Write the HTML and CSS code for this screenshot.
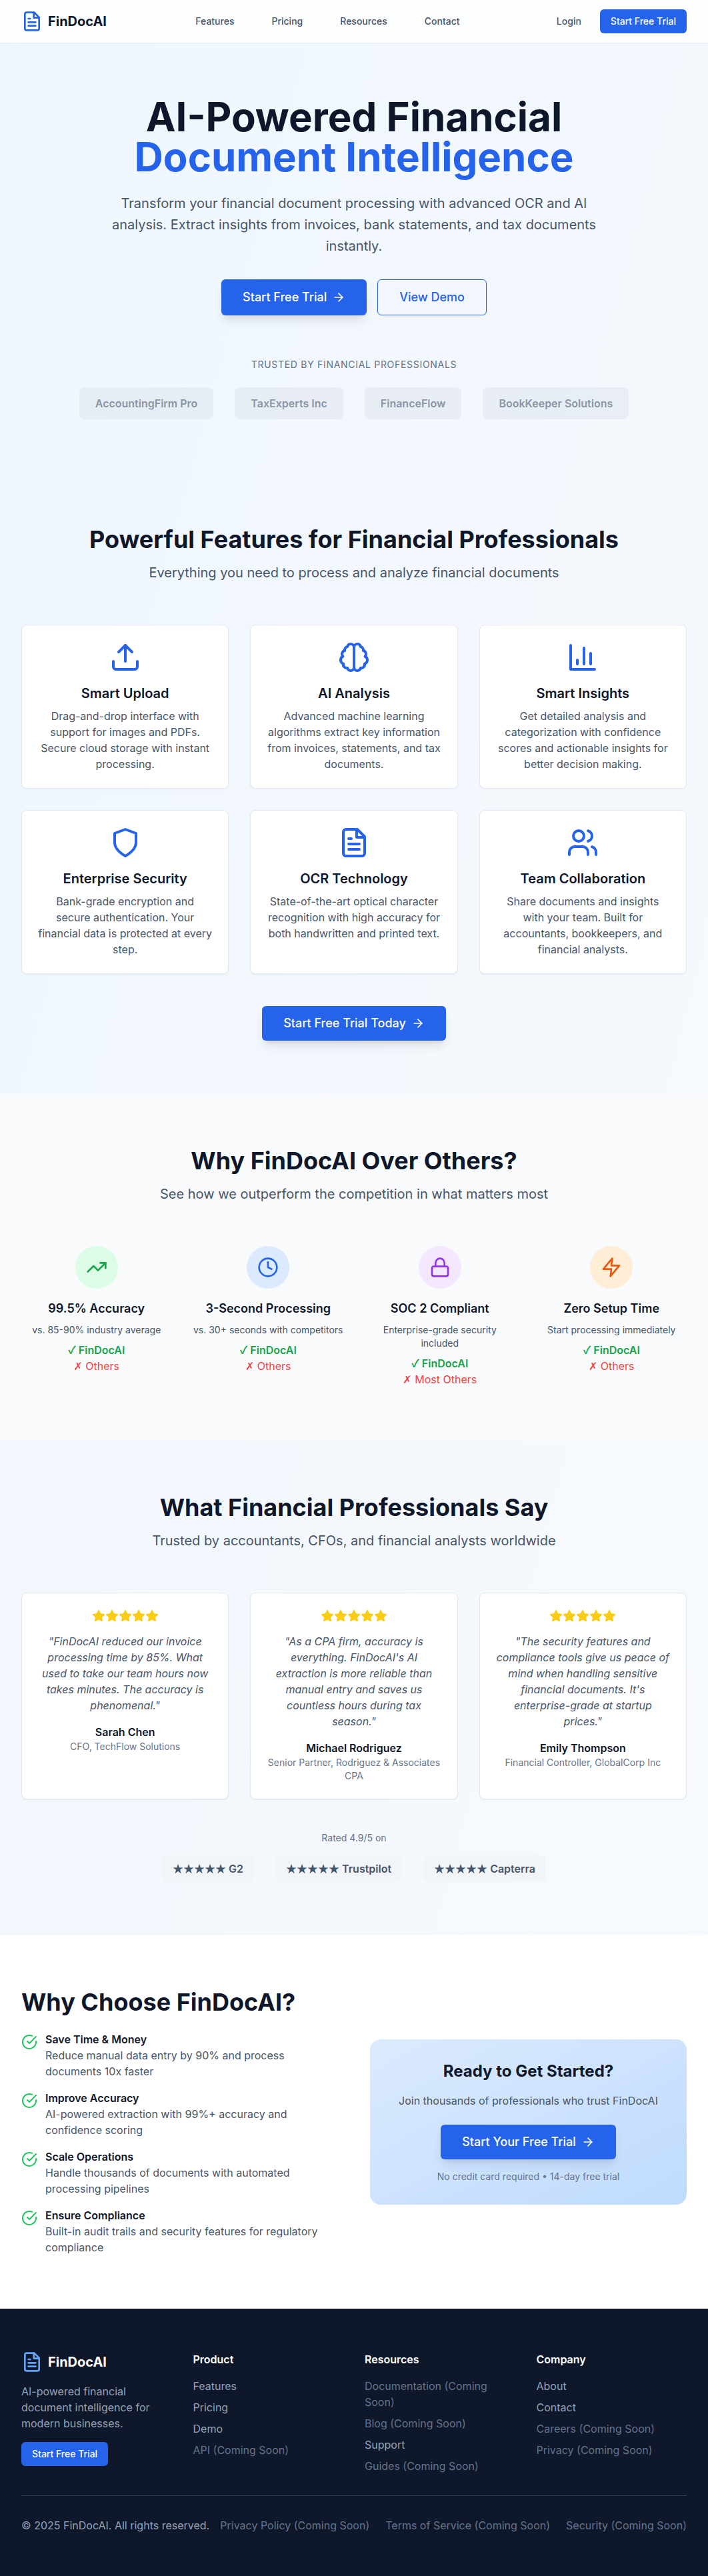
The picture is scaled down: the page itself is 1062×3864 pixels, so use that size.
FILE: index.html
```html
<!DOCTYPE html>
<html lang="en">
<head>
  <meta charset="utf-8">
  <meta name="viewport" content="width=device-width, initial-scale=1">
  <title>FinDocAI – AI-Powered Financial Document Intelligence</title>
  <link rel="stylesheet" href="styles.css">
</head>
<body>
  <svg class="sprite" aria-hidden="true">
    <symbol id="file-text" viewBox="0 0 24 24"><path d="M14.5 2H6a2 2 0 0 0-2 2v16a2 2 0 0 0 2 2h12a2 2 0 0 0 2-2V7.5L14.5 2z"/><path d="M14 2v6h6"/><path d="M16 13H8"/><path d="M16 17H8"/><path d="M10 9H8"/></symbol>
    <symbol id="arrow-right" viewBox="0 0 24 24"><path d="M5 12h14"/><path d="m12 5 7 7-7 7"/></symbol>
    <symbol id="upload" viewBox="0 0 24 24"><path d="M21 15v4a2 2 0 0 1-2 2H5a2 2 0 0 1-2-2v-4"/><path d="m17 8-5-5-5 5"/><path d="M12 3v12"/></symbol>
    <symbol id="brain" viewBox="0 0 24 24"><path d="M9.5 2A2.5 2.5 0 0 1 12 4.5v15a2.5 2.5 0 0 1-4.96.44 2.5 2.5 0 0 1-2.96-3.08 3 3 0 0 1-.34-5.58 2.5 2.5 0 0 1 1.32-4.24 2.5 2.5 0 0 1 1.98-3A2.5 2.5 0 0 1 9.5 2Z"/><path d="M14.5 2A2.5 2.5 0 0 0 12 4.5v15a2.5 2.5 0 0 0 4.96.44 2.5 2.5 0 0 0 2.96-3.08 3 3 0 0 0 .34-5.58 2.5 2.5 0 0 0-1.32-4.24 2.5 2.5 0 0 0-1.98-3A2.5 2.5 0 0 0 14.5 2Z"/></symbol>
    <symbol id="bar-chart" viewBox="0 0 24 24"><path d="M3 3v18h18"/><path d="M18 17V9"/><path d="M13 17V5"/><path d="M8 17v-3"/></symbol>
    <symbol id="shield" viewBox="0 0 24 24"><path d="M12 22s8-4 8-10V5l-8-3-8 3v7c0 6 8 10 8 10"/></symbol>
    <symbol id="users" viewBox="0 0 24 24"><path d="M16 21v-2a4 4 0 0 0-4-4H6a4 4 0 0 0-4 4v2"/><circle cx="9" cy="7" r="4"/><path d="M22 21v-2a4 4 0 0 0-3-3.87"/><path d="M16 3.13a4 4 0 0 1 0 7.75"/></symbol>
    <symbol id="trending-up" viewBox="0 0 24 24"><path d="m22 7-8.5 8.5-5-5L2 17"/><path d="M16 7h6v6"/></symbol>
    <symbol id="clock" viewBox="0 0 24 24"><circle cx="12" cy="12" r="10"/><path d="M12 6v6l4 2"/></symbol>
    <symbol id="lock" viewBox="0 0 24 24"><rect x="3" y="11" width="18" height="11" rx="2"/><path d="M7 11V7a5 5 0 0 1 10 0v4"/></symbol>
    <symbol id="zap" viewBox="0 0 24 24"><path d="M13 2 3 14h9l-1 8 10-12h-9l1-8z"/></symbol>
    <symbol id="star" viewBox="0 0 24 24"><path d="m12 2 3.09 6.26L22 9.27l-5 4.87 1.18 6.88L12 17.77l-6.18 3.25L7 14.14 2 9.27l6.91-1.01L12 2z"/></symbol>
    <symbol id="check-circle" viewBox="0 0 24 24"><path d="M22 11.08V12a10 10 0 1 1-5.93-9.14"/><path d="m9 11 3 3L22 4"/></symbol>
  </svg>

  <header class="site-header">
    <div class="container header-row">
      <a class="brand" href="#"><svg class="icon icon-lg"><use href="#file-text"/></svg>FinDocAI</a>
      <nav class="main-nav">
        <a href="#features">Features</a>
        <a href="#pricing">Pricing</a>
        <a href="#resources">Resources</a>
        <a href="#contact">Contact</a>
      </nav>
      <div class="header-actions">
        <button class="btn btn-ghost" type="button">Login</button>
        <button class="btn btn-primary" type="button">Start Free Trial</button>
      </div>
    </div>
  </header>

  <main>
    <section class="section hero">
      <div class="container">
        <h1 class="hero-title">AI-Powered Financial <span class="hero-accent">Document Intelligence</span></h1>
        <p class="hero-text">Transform your financial document processing with advanced OCR and AI analysis. Extract insights from invoices, bank statements, and tax documents instantly.</p>
        <div class="hero-actions">
          <button class="btn btn-primary btn-large" type="button">Start Free Trial<svg class="icon icon-sm"><use href="#arrow-right"/></svg></button>
          <button class="btn btn-outline btn-large" type="button">View Demo</button>
        </div>
        <p class="trusted-label">Trusted by Financial Professionals</p>
        <ul class="trusted-list">
          <li>AccountingFirm Pro</li>
          <li>TaxExperts Inc</li>
          <li>FinanceFlow</li>
          <li>BookKeeper Solutions</li>
        </ul>
      </div>
    </section>

    <section class="section" id="features">
      <div class="container">
        <div class="section-head">
          <h2 class="section-title">Powerful Features for Financial Professionals</h2>
          <p class="section-text">Everything you need to process and analyze financial documents</p>
        </div>
        <div class="card-grid">
          <article class="card">
            <svg class="icon icon-xl"><use href="#upload"/></svg>
            <h3 class="card-title">Smart Upload</h3>
            <p class="card-text">Drag-and-drop interface with support for images and PDFs. Secure cloud storage with instant processing.</p>
          </article>
          <article class="card">
            <svg class="icon icon-xl"><use href="#brain"/></svg>
            <h3 class="card-title">AI Analysis</h3>
            <p class="card-text">Advanced machine learning algorithms extract key information from invoices, statements, and tax documents.</p>
          </article>
          <article class="card">
            <svg class="icon icon-xl"><use href="#bar-chart"/></svg>
            <h3 class="card-title">Smart Insights</h3>
            <p class="card-text">Get detailed analysis and categorization with confidence scores and actionable insights for better decision making.</p>
          </article>
          <article class="card">
            <svg class="icon icon-xl"><use href="#shield"/></svg>
            <h3 class="card-title">Enterprise Security</h3>
            <p class="card-text">Bank-grade encryption and secure authentication. Your financial data is protected at every step.</p>
          </article>
          <article class="card">
            <svg class="icon icon-xl"><use href="#file-text"/></svg>
            <h3 class="card-title">OCR Technology</h3>
            <p class="card-text">State-of-the-art optical character recognition with high accuracy for both handwritten and printed text.</p>
          </article>
          <article class="card">
            <svg class="icon icon-xl"><use href="#users"/></svg>
            <h3 class="card-title">Team Collaboration</h3>
            <p class="card-text">Share documents and insights with your team. Built for accountants, bookkeepers, and financial analysts.</p>
          </article>
        </div>
        <div class="section-cta">
          <button class="btn btn-primary btn-large" type="button">Start Free Trial Today<svg class="icon icon-sm"><use href="#arrow-right"/></svg></button>
        </div>
      </div>
    </section>

    <section class="section section-muted">
      <div class="container">
        <div class="section-head">
          <h2 class="section-title">Why FinDocAI Over Others?</h2>
          <p class="section-text">See how we outperform the competition in what matters most</p>
        </div>
        <div class="compare-grid">
          <article class="compare">
            <span class="disc disc-green"><svg class="icon icon-lg"><use href="#trending-up"/></svg></span>
            <h3 class="compare-title">99.5% Accuracy</h3>
            <p class="compare-text">vs. 85-90% industry average</p>
            <p class="compare-us"><span class="tick">✓</span> FinDocAI</p>
            <p class="compare-them"><span class="cross">✗</span> Others</p>
          </article>
          <article class="compare">
            <span class="disc disc-blue"><svg class="icon icon-lg"><use href="#clock"/></svg></span>
            <h3 class="compare-title">3-Second Processing</h3>
            <p class="compare-text">vs. 30+ seconds with competitors</p>
            <p class="compare-us"><span class="tick">✓</span> FinDocAI</p>
            <p class="compare-them"><span class="cross">✗</span> Others</p>
          </article>
          <article class="compare">
            <span class="disc disc-purple"><svg class="icon icon-lg"><use href="#lock"/></svg></span>
            <h3 class="compare-title">SOC 2 Compliant</h3>
            <p class="compare-text">Enterprise-grade security included</p>
            <p class="compare-us"><span class="tick">✓</span> FinDocAI</p>
            <p class="compare-them"><span class="cross">✗</span> Most Others</p>
          </article>
          <article class="compare">
            <span class="disc disc-orange"><svg class="icon icon-lg"><use href="#zap"/></svg></span>
            <h3 class="compare-title">Zero Setup Time</h3>
            <p class="compare-text">Start processing immediately</p>
            <p class="compare-us"><span class="tick">✓</span> FinDocAI</p>
            <p class="compare-them"><span class="cross">✗</span> Others</p>
          </article>
        </div>
      </div>
    </section>

    <section class="section">
      <div class="container">
        <div class="section-head">
          <h2 class="section-title">What Financial Professionals Say</h2>
          <p class="section-text">Trusted by accountants, CFOs, and financial analysts worldwide</p>
        </div>
        <div class="card-grid">
          <article class="card">
            <div class="stars" role="img" aria-label="5 out of 5 stars"><svg class="icon icon-sm"><use href="#star"/></svg><svg class="icon icon-sm"><use href="#star"/></svg><svg class="icon icon-sm"><use href="#star"/></svg><svg class="icon icon-sm"><use href="#star"/></svg><svg class="icon icon-sm"><use href="#star"/></svg></div>
            <p class="quote">"FinDocAI reduced our invoice processing time by 85%. What used to take our team hours now takes minutes. The accuracy is phenomenal."</p>
            <p class="author">Sarah Chen</p>
            <p class="role">CFO, TechFlow Solutions</p>
          </article>
          <article class="card">
            <div class="stars" role="img" aria-label="5 out of 5 stars"><svg class="icon icon-sm"><use href="#star"/></svg><svg class="icon icon-sm"><use href="#star"/></svg><svg class="icon icon-sm"><use href="#star"/></svg><svg class="icon icon-sm"><use href="#star"/></svg><svg class="icon icon-sm"><use href="#star"/></svg></div>
            <p class="quote">"As a CPA firm, accuracy is everything. FinDocAI's AI extraction is more reliable than manual entry and saves us countless hours during tax season."</p>
            <p class="author">Michael Rodriguez</p>
            <p class="role">Senior Partner, Rodriguez &amp; Associates CPA</p>
          </article>
          <article class="card">
            <div class="stars" role="img" aria-label="5 out of 5 stars"><svg class="icon icon-sm"><use href="#star"/></svg><svg class="icon icon-sm"><use href="#star"/></svg><svg class="icon icon-sm"><use href="#star"/></svg><svg class="icon icon-sm"><use href="#star"/></svg><svg class="icon icon-sm"><use href="#star"/></svg></div>
            <p class="quote">"The security features and compliance tools give us peace of mind when handling sensitive financial documents. It's enterprise-grade at startup prices."</p>
            <p class="author">Emily Thompson</p>
            <p class="role">Financial Controller, GlobalCorp Inc</p>
          </article>
        </div>
        <p class="rated-label">Rated 4.9/5 on</p>
        <ul class="rated-list">
          <li><span class="rating">★★★★★</span> G2</li>
          <li><span class="rating">★★★★★</span> Trustpilot</li>
          <li><span class="rating">★★★★★</span> Capterra</li>
        </ul>
      </div>
    </section>

    <section class="section section-white">
      <div class="container choose-grid">
        <div>
          <h2 class="section-title">Why Choose FinDocAI?</h2>
          <ul class="benefits">
            <li class="benefit">
              <svg class="icon icon-md"><use href="#check-circle"/></svg>
              <div><h3 class="benefit-title">Save Time &amp; Money</h3><p>Reduce manual data entry by 90% and process documents 10x faster</p></div>
            </li>
            <li class="benefit">
              <svg class="icon icon-md"><use href="#check-circle"/></svg>
              <div><h3 class="benefit-title">Improve Accuracy</h3><p>AI-powered extraction with 99%+ accuracy and confidence scoring</p></div>
            </li>
            <li class="benefit">
              <svg class="icon icon-md"><use href="#check-circle"/></svg>
              <div><h3 class="benefit-title">Scale Operations</h3><p>Handle thousands of documents with automated processing pipelines</p></div>
            </li>
            <li class="benefit">
              <svg class="icon icon-md"><use href="#check-circle"/></svg>
              <div><h3 class="benefit-title">Ensure Compliance</h3><p>Built-in audit trails and security features for regulatory compliance</p></div>
            </li>
          </ul>
        </div>
        <aside class="signup">
          <h3 class="signup-title">Ready to Get Started?</h3>
          <p class="signup-text">Join thousands of professionals who trust FinDocAI</p>
          <button class="btn btn-primary btn-large" type="button">Start Your Free Trial<svg class="icon icon-sm"><use href="#arrow-right"/></svg></button>
          <p class="signup-note">No credit card required • 14-day free trial</p>
        </aside>
      </div>
    </section>
  </main>

  <footer class="site-footer">
    <div class="container">
      <div class="footer-grid">
        <div>
          <a class="brand brand-light" href="#"><svg class="icon icon-lg"><use href="#file-text"/></svg>FinDocAI</a>
          <p class="footer-text">AI-powered financial document intelligence for modern businesses.</p>
          <button class="btn btn-primary" type="button">Start Free Trial</button>
        </div>
        <div>
          <h3 class="footer-title">Product</h3>
          <ul class="footer-links">
            <li><a href="#features">Features</a></li>
            <li><a href="#pricing">Pricing</a></li>
            <li><a href="#demo">Demo</a></li>
            <li class="soon">API (Coming Soon)</li>
          </ul>
        </div>
        <div>
          <h3 class="footer-title">Resources</h3>
          <ul class="footer-links">
            <li class="soon">Documentation (Coming Soon)</li>
            <li class="soon">Blog (Coming Soon)</li>
            <li><a href="#support">Support</a></li>
            <li class="soon">Guides (Coming Soon)</li>
          </ul>
        </div>
        <div>
          <h3 class="footer-title">Company</h3>
          <ul class="footer-links">
            <li><a href="#about">About</a></li>
            <li><a href="#contact">Contact</a></li>
            <li class="soon">Careers (Coming Soon)</li>
            <li class="soon">Privacy (Coming Soon)</li>
          </ul>
        </div>
      </div>
      <div class="footer-bottom">
        <p>© 2025 FinDocAI. All rights reserved.</p>
        <ul class="legal">
          <li>Privacy Policy (Coming Soon)</li>
          <li>Terms of Service (Coming Soon)</li>
          <li>Security (Coming Soon)</li>
        </ul>
      </div>
    </div>
  </footer>
</body>
</html>
```
FILE: styles.css
```css
*,
*::before,
*::after {
  box-sizing: border-box;
}

body {
  margin: 0;
  background: linear-gradient(to bottom right, #eff6ff, #f8fafc);
  color: #0f172a;
  font-family: Inter, "Liberation Sans", sans-serif;
  font-size: 16px;
  line-height: 24px;
}

h1, h2, h3, p, ul {
  margin: 0;
  padding: 0;
}

ul {
  list-style: none;
}

a {
  color: inherit;
  text-decoration: none;
}

.sprite {
  display: none;
}

.container {
  max-width: 1280px;
  margin: 0 auto;
  padding: 0 32px;
}

/* Icons */
.icon {
  flex: none;
  display: block;
  fill: none;
  stroke: currentColor;
  stroke-width: 2;
  stroke-linecap: round;
  stroke-linejoin: round;
}

.icon-sm { width: 20px; height: 20px; }
.icon-md { width: 24px; height: 24px; }
.icon-lg { width: 32px; height: 32px; }
.icon-xl { width: 48px; height: 48px; }

/* Buttons */
.btn {
  display: inline-flex;
  align-items: center;
  justify-content: center;
  gap: 8px;
  padding: 8px 16px;
  border: 0;
  border-radius: 6px;
  background: none;
  font: inherit;
  font-size: 14px;
  font-weight: 500;
  line-height: 20px;
  white-space: nowrap;
  cursor: pointer;
}

.btn-primary {
  background: #2563eb;
  color: #fff;
}

.btn-ghost {
  padding: 8px 12px;
  color: #475569;
}

.btn-large {
  padding: 12px 32px;
  font-size: 18px;
  line-height: 28px;
}

.btn-large.btn-primary {
  box-shadow: 0 10px 15px -3px rgb(0 0 0 / 10%), 0 4px 6px -4px rgb(0 0 0 / 10%);
}

.btn-outline {
  border: 1px solid #2563eb;
  color: #2563eb;
}

/* Header */
.site-header {
  border-bottom: 1px solid #e2e8f0;
  background: rgb(255 255 255 / 80%);
}

.header-row {
  display: flex;
  align-items: center;
  justify-content: space-between;
  height: 64px;
}

.brand {
  display: flex;
  align-items: center;
  gap: 8px;
  font-size: 20px;
  font-weight: 700;
  line-height: 28px;
}

.brand .icon {
  color: #2563eb;
}

.main-nav {
  display: flex;
  gap: 56px;
  color: #475569;
  font-size: 14px;
  font-weight: 500;
  line-height: 20px;
}

.header-actions {
  display: flex;
  align-items: center;
  gap: 16px;
}

/* Sections */
.section {
  padding: 80px 0;
}

.section-muted {
  background: #f8fafc;
}

.section-white {
  background: #fff;
}

.section-head {
  margin-bottom: 64px;
  text-align: center;
}

.section-title {
  font-size: 36px;
  font-weight: 700;
  line-height: 40px;
}

.section-text {
  margin-top: 16px;
  color: #475569;
  font-size: 20px;
  line-height: 28px;
}

.section-cta {
  display: flex;
  justify-content: center;
  margin-top: 48px;
}

/* Hero */
.hero {
  text-align: center;
}

.hero-title {
  font-size: 60px;
  font-weight: 700;
  line-height: 60px;
}

.hero-accent {
  display: block;
  color: #2563eb;
}

.hero-text {
  max-width: 768px;
  margin: 24px auto 34px;
  color: #475569;
  font-size: 20px;
  line-height: 32px;
}

.hero-actions {
  display: flex;
  justify-content: center;
  gap: 16px;
}

.trusted-label {
  margin-top: 64px;
  color: #64748b;
  font-size: 14px;
  letter-spacing: 0.05em;
  line-height: 20px;
  text-transform: uppercase;
}

.trusted-list {
  display: flex;
  flex-wrap: wrap;
  justify-content: center;
  gap: 32px;
  margin-top: 24px;
  opacity: 0.6;
}

.trusted-list li {
  padding: 12px 24px;
  border-radius: 8px;
  background: #e2e8f0;
  color: #475569;
  font-weight: 600;
}

/* Cards */
.card-grid {
  display: grid;
  grid-template-columns: repeat(3, 1fr);
  gap: 32px;
}

.card {
  padding: 24px;
  border: 1px solid #e2e8f0;
  border-radius: 8px;
  background: #fff;
  box-shadow: 0 1px 2px rgb(0 0 0 / 5%);
  text-align: center;
}

.card .icon-xl {
  margin: 0 auto 16px;
  color: #2563eb;
}

.card-title {
  font-size: 20px;
  font-weight: 600;
  line-height: 28px;
}

.card-text {
  margin-top: 8px;
  color: #475569;
}

/* Comparison */
.compare-grid {
  display: grid;
  grid-template-columns: repeat(4, 1fr);
  gap: 32px;
  text-align: center;
}

.disc {
  display: flex;
  align-items: center;
  justify-content: center;
  width: 64px;
  height: 64px;
  margin: 0 auto 16px;
  border-radius: 50%;
}

.disc-green { background: #dcfce7; color: #16a34a; }
.disc-blue { background: #dbeafe; color: #2563eb; }
.disc-purple { background: #f3e8ff; color: #9333ea; }
.disc-orange { background: #ffedd5; color: #ea580c; }

.compare-title {
  font-size: 18px;
  font-weight: 600;
  line-height: 28px;
}

.compare-text {
  margin: 8px 0;
  color: #475569;
  font-size: 14px;
  line-height: 20px;
}

.compare-us {
  color: #16a34a;
  font-weight: 600;
}

.compare-them {
  color: #ef4444;
}

.tick,
.cross,
.rating {
  line-height: 1;
}

.tick,
.rating {
  font-family: "Noto Sans CJK JP", sans-serif;
}

.cross {
  font-family: "DejaVu Sans", sans-serif;
}

/* Testimonials */
.stars {
  display: flex;
  justify-content: center;
  color: #facc15;
}

.stars .icon {
  fill: currentColor;
}

.quote {
  margin: 16px 0;
  color: #475569;
  font-style: italic;
}

.author {
  font-weight: 600;
}

.role {
  color: #64748b;
  font-size: 14px;
  line-height: 20px;
}

.rated-label {
  margin-top: 48px;
  color: #64748b;
  font-size: 14px;
  line-height: 20px;
  text-align: center;
}

.rated-list {
  display: flex;
  flex-wrap: wrap;
  justify-content: center;
  gap: 32px;
  margin-top: 16px;
}

.rated-list li {
  padding: 8px 16px;
  border-radius: 8px;
  background: #f1f5f9;
  color: #475569;
  font-weight: 600;
}

/* Why choose */
.choose-grid {
  display: grid;
  grid-template-columns: repeat(2, 1fr);
  align-items: center;
  gap: 48px;
}

.benefits {
  display: grid;
  gap: 16px;
  margin-top: 24px;
  color: #475569;
}

.benefit {
  display: flex;
  gap: 12px;
}

.benefit .icon {
  margin-top: 4px;
  color: #22c55e;
}

.benefit-title {
  color: #0f172a;
  font-size: 16px;
  font-weight: 600;
}

.signup {
  padding: 32px;
  border-radius: 16px;
  background: linear-gradient(to bottom right, #dbeafe, #bfdbfe);
  text-align: center;
}

.signup-title {
  font-size: 24px;
  font-weight: 700;
  line-height: 32px;
}

.signup-text {
  margin: 16px 0 24px;
  color: #475569;
}

.signup-note {
  margin-top: 16px;
  color: #64748b;
  font-size: 14px;
  line-height: 20px;
}

/* Footer */
.site-footer {
  padding: 64px 0;
  background: #0f172a;
  color: #94a3b8;
}

.footer-grid {
  display: grid;
  grid-template-columns: repeat(4, 1fr);
  gap: 32px;
}

.brand-light {
  color: #fff;
}

.brand-light .icon {
  color: #60a5fa;
}

.footer-text {
  margin: 16px 0;
}

.footer-title {
  color: #fff;
  font-size: 16px;
  font-weight: 600;
}

.footer-links {
  display: grid;
  gap: 8px;
  margin-top: 16px;
}

.soon,
.legal {
  color: #64748b;
}

.footer-bottom {
  display: flex;
  align-items: center;
  justify-content: space-between;
  margin-top: 32px;
  padding-top: 32px;
  border-top: 1px solid #334155;
}

.legal {
  display: flex;
  gap: 24px;
}
```
